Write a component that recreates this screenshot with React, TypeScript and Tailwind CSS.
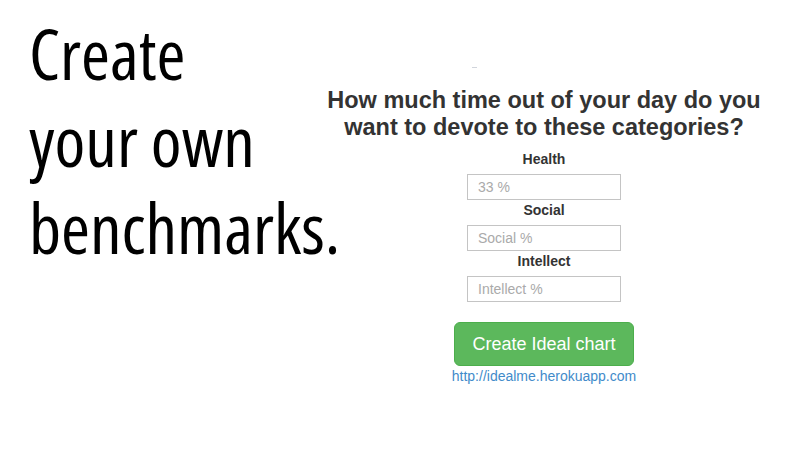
const fields = [
  { label: 'Health', placeholder: '33 %' },
  { label: 'Social', placeholder: 'Social %' },
  { label: 'Intellect', placeholder: 'Intellect %' },
];

export default function App() {
  return (
    <div className="flex h-[450px] w-[800px] overflow-hidden bg-white">
      {/* slide title */}
      <div className="w-[300px] shrink-0 pl-[29px] pt-[10px]">
        <h1 className="whitespace-nowrap font-['Open_Sans',sans-serif] text-[70px] font-normal leading-[87px] text-black font-stretch-condensed">
          Create
          <br />
          your own
          <br />
          benchmarks.
        </h1>
      </div>

      {/* form screenshot */}
      <div className="flex w-[488px] flex-col items-center pt-[67px] font-['Liberation_Sans',Arial,sans-serif]">
        <div className="mr-[140px] h-px w-[5px] bg-gray-300" />
        <h2 className="mt-[19px] text-center text-[23.5px] font-bold leading-[27px] text-[#333]">
          How much time out of your day do you
          <br />
          want to devote to these categories?
        </h2>

        <div className="mt-[8px] flex flex-col items-center">
          {fields.map((f) => (
            <div key={f.label} className="flex flex-col items-center">
              <label className="mb-[5px] text-[14px] font-bold leading-[20px] text-[#333]">{f.label}</label>
              <input
                type="text"
                placeholder={f.placeholder}
                className="h-[26px] w-[154px] border border-[#c4c4c4] bg-white px-[10px] text-[14px] text-[#555] placeholder:text-[#aaa] focus:outline-none"
              />
            </div>
          ))}
        </div>

        <button className="mt-[20px] h-[44px] w-[180px] rounded-[6px] border border-[#4cae4c] bg-[#5cb85c] text-[18px] text-white">
          Create Ideal chart
        </button>
        <a href="#" className="text-[14px] leading-[20px] text-[#428bca]">
          http://idealme.herokuapp.com
        </a>
      </div>
    </div>
  );
}
